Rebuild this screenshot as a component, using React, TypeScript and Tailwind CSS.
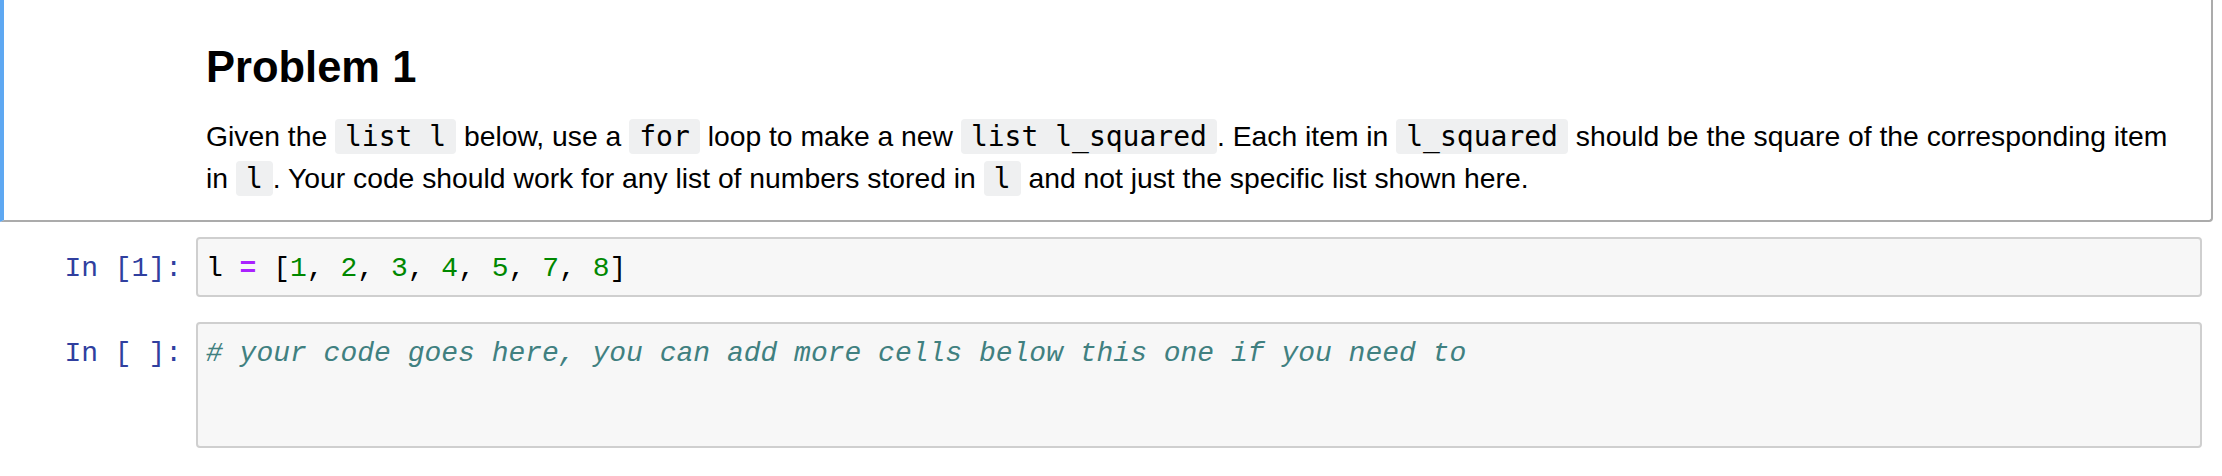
import React from "react";

function InlineCode({ children }: { children: React.ReactNode }) {
  return (
    <code className="rounded-[4px] bg-[#eff0f1] px-[10px] py-px font-['DejaVu_Sans_Mono',monospace] text-[28px] leading-none text-black">
      {children}
    </code>
  );
}

function Prompt({ label }: { label: string }) {
  return (
    <div className="w-[196px] shrink-0 whitespace-pre pr-[14px] pt-[15px] text-right font-['Liberation_Mono',monospace] text-[28px] leading-[34px] text-[#303f9f]">
      {label}
    </div>
  );
}

export default function App() {
  return (
    <div className="h-[476px] w-[2222px] overflow-hidden bg-white">
      {/* markdown cell, selected */}
      <div className="mr-[9px] rounded-br-[4px] border-t-0 border-r-2 border-b-2 border-l-4 border-r-[#ababab] border-b-[#ababab] border-l-[#5ea8f2] pt-[41px] pr-[40px] pb-[21px] pl-[202px] font-['Liberation_Sans',Arial,sans-serif] text-black">
        <h2 className="text-[43.5px] font-bold leading-[52px]">Problem 1</h2>
        <p className="mt-[22px] whitespace-nowrap text-[28.3px] leading-[42px]">
          Given the <InlineCode>list l</InlineCode> below, use a{" "}
          <InlineCode>for</InlineCode> loop to make a new{" "}
          <InlineCode>list l_squared</InlineCode>. Each item in{" "}
          <InlineCode>l_squared</InlineCode> should be the square of the
          corresponding item
          <br />
          in <InlineCode>l</InlineCode>. Your code should work for any list of
          numbers stored in <InlineCode>l</InlineCode> and not just the specific
          list shown here.
        </p>
      </div>

      {/* code cell 1 */}
      <div className="mt-[15px] flex pr-[20px]">
        <Prompt label="In [1]:" />
        <div className="h-[60px] flex-1 rounded-[4px] border-2 border-[#cfcfcf] bg-[#f7f7f7] pt-[13px] pl-2">
          <div className="whitespace-pre font-['Liberation_Mono',monospace] text-[28px] leading-[34px] text-black">
            l <span className="font-bold text-[#aa22ff]">=</span> [
            <span className="text-[#008800]">1</span>,{" "}
            <span className="text-[#008800]">2</span>,{" "}
            <span className="text-[#008800]">3</span>,{" "}
            <span className="text-[#008800]">4</span>,{" "}
            <span className="text-[#008800]">5</span>,{" "}
            <span className="text-[#008800]">7</span>,{" "}
            <span className="text-[#008800]">8</span>]
          </div>
        </div>
      </div>

      {/* code cell 2 */}
      <div className="mt-[25px] flex pr-[20px]">
        <Prompt label="In [ ]:" />
        <div className="h-[126px] flex-1 rounded-[4px] border-2 border-[#cfcfcf] bg-[#f7f7f7] pt-[13px] pl-2">
          <div className="whitespace-pre font-['Liberation_Mono',monospace] text-[28px] italic leading-[34px] text-[#408080]">
            # your code goes here, you can add more cells below this one if you need to
          </div>
        </div>
      </div>
    </div>
  );
}
